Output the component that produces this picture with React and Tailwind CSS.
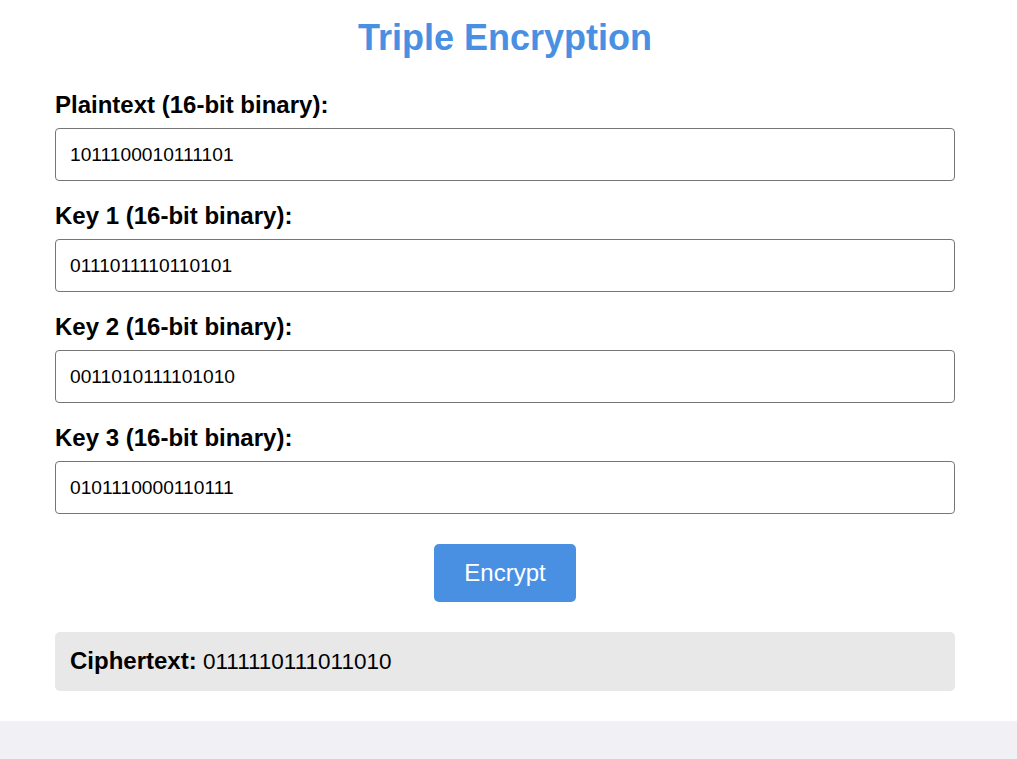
import React from "react";

const rows = [
  { label: "Plaintext (16-bit binary):", value: "1011100010111101" },
  { label: "Key 1 (16-bit binary):", value: "0111011110110101" },
  { label: "Key 2 (16-bit binary):", value: "0011010111101010" },
  { label: "Key 3 (16-bit binary):", value: "0101110000110111" },
];

export default function App() {
  return (
    <div
      className="min-h-screen bg-[#f0f0f5]"
      style={{ fontFamily: '"Liberation Sans", Arial, sans-serif' }}
    >
      <div className="bg-white pl-[55px] pr-[62px] pt-[17px] pb-[30px]">
        <h1 className="text-center text-[36px] leading-[42px] font-bold text-[#4a90e2] mb-[32px]">
          Triple Encryption
        </h1>
        <div className="flex flex-col gap-[21px]">
          {rows.map((r) => (
            <div key={r.label} className="flex flex-col">
              <label className="text-[24px] leading-[28px] font-bold text-black mb-[9px]">
                {r.label}
              </label>
              <input
                type="text"
                defaultValue={r.value}
                className="h-[53px] w-full border border-[#767676] rounded-[4px] px-[14px] text-[19.2px] text-black bg-white outline-none"
              />
            </div>
          ))}
        </div>
        <div className="flex justify-center mt-[30px]">
          <button className="bg-[#4a90e2] text-white text-[24px] leading-[28px] px-[30px] py-[15px] rounded-[5px]">
            Encrypt
          </button>
        </div>
        <div className="mt-[30px] bg-[#e8e8e8] rounded-[5px] p-[15px] text-[22.5px] leading-[28px] text-black">
          <span className="font-bold text-[24px]">Ciphertext:</span> 0111110111011010
        </div>
      </div>
    </div>
  );
}
